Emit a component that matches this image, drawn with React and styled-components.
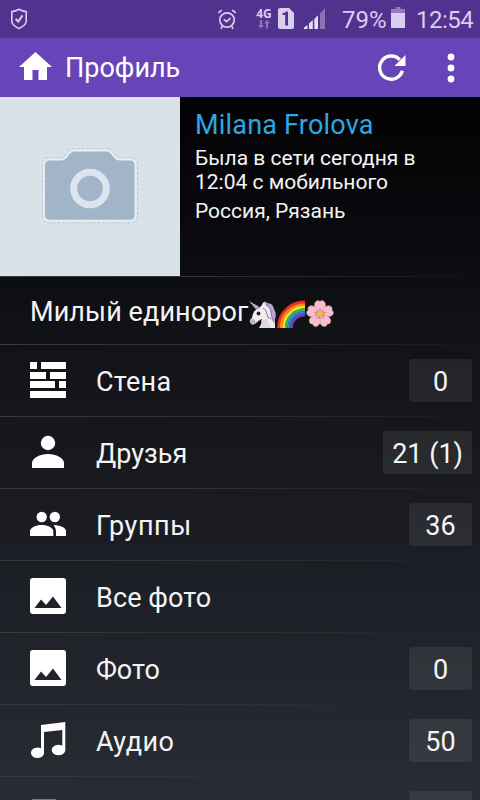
import React from 'react';
import styled, { createGlobalStyle } from 'styled-components';

const Global = createGlobalStyle`
  * { box-sizing: border-box; }
  body { margin: 0; background: #000; }
  svg { display: block; flex: none; }
`;

const Screen = styled.div`
  width: 480px;
  height: 800px;
  overflow: hidden;
  display: flex;
  flex-direction: column;
  font-family: Roboto, 'Noto Sans', sans-serif;
  color: #f4f4f6;
  background: linear-gradient(180deg, #020204 97px, #0a0a0e 230px, #111216 330px, #17181d 440px, #1c1e25 560px, #23252d 680px, #292c34 800px);
`;

const StatusBar = styled.header`
  height: 38px;
  flex: none;
  display: flex;
  align-items: center;
  padding: 0 5px 1px 10px;
  background: #51338f;
  color: #d9cdf0;
`;

const StatusTray = styled.div`
  display: flex;
  align-items: center;
  margin-left: auto;
`;

const Network = styled.div`
  display: flex;
  flex-direction: column;
  align-items: center;
  width: 18px;
  height: 22px;
  margin: 0 5px 0 18px;
  font: 700 12px/12px 'Open Sans', sans-serif;
`;

const StatusText = styled.span`
  width: ${(p) => p.$width}px;
  margin-left: ${(p) => p.$gap}px;
  font-size: 24px;
  line-height: 28px;
  letter-spacing: ${(p) => p.$spacing || 0}px;
  white-space: nowrap;
  padding-top: 2px;
`;

const Spaced = styled.div`
  margin-left: ${(p) => p.$gap}px;
  padding-bottom: ${(p) => p.$lift || 0}px;
`;

const Toolbar = styled.div`
  height: 59px;
  flex: none;
  display: flex;
  align-items: center;
  padding: 0 25px 0 18px;
  background: #6844b9;
  color: #fff;
`;

const ToolbarGlyph = styled.div`
  padding-bottom: 4px;
`;

const Title = styled.h1`
  margin: 0 auto 0 12px;
  font-size: 27px;
  line-height: 32px;
  font-weight: 400;
`;

const IconButton = styled.button`
  border: 0;
  padding: 0;
  margin-left: ${(p) => p.$gap || 0}px;
  background: none;
  color: inherit;
`;

const fade = 'linear-gradient(90deg, #383a40, #2d2f35 50%, rgba(45, 47, 53, 0.1))';

const Profile = styled.section`
  height: 180px;
  flex: none;
  display: flex;
  border-bottom: 1px solid;
  border-image: ${fade} 1;
`;

const Avatar = styled.div`
  width: 180px;
  height: 179px;
  flex: none;
  border-top: 1px solid #e2d9fa;
  background:
    repeating-linear-gradient(0deg, rgba(255, 255, 255, 0.07) 0 1px, transparent 1px 4px),
    repeating-linear-gradient(90deg, rgba(255, 255, 255, 0.07) 0 1px, transparent 1px 4px),
    #d8e0e8;
`;

const Details = styled.div`
  padding: 12px 0 0 15px;
`;

const Name = styled.h2`
  margin: 0 0 5px;
  font-size: 27px;
  line-height: 32px;
  font-weight: 400;
  letter-spacing: 0.2px;
  color: #2ba7e6;
`;

const Info = styled.p`
  margin: 0 0 5px;
  width: 240px;
  font-size: 21px;
  line-height: 24px;
`;

const About = styled.div`
  height: 68px;
  flex: none;
  display: flex;
  align-items: center;
  padding: 3px 0 0 30px;
  font-size: 27px;
  letter-spacing: 0.1px;
  border-bottom: 1px solid;
  border-image: ${fade} 1;
`;

const EmojiGroup = styled.span`
  display: flex;
  gap: 1px;
  margin-left: 1px;
  padding-top: 4px;
`;

const Row = styled.div`
  height: 72px;
  flex: none;
  display: flex;
  align-items: center;
  padding: 0 8px 0 30px;
  border-bottom: 1px solid;
  border-image: ${fade} 1;
`;

const RowIcon = styled.div`
  padding-bottom: 2px;
  color: #fff;
`;

const Label = styled.span`
  margin: 2px auto 0 30px;
  font-size: 27px;
  line-height: 32px;
  letter-spacing: ${(p) => p.$spacing || 0}px;
`;

const Count = styled.span`
  min-width: 63px;
  height: 43px;
  padding: 2px 9px 0 9px;
  border-radius: 3px;
  background: rgba(255, 255, 255, 0.075);
  font-size: 27px;
  line-height: 43px;
  text-align: center;
  white-space: nowrap;
`;

const ShieldIcon = () => (
  <svg width="18" height="22" viewBox="0 0 18 22" fill="none" stroke="currentColor" strokeWidth="1.6">
    <path d="M9 1.2Q12.5 3.2 16.2 3.6V13.5Q16 17 9 20.6Q2 17 1.8 13.5V3.6Q5.5 3.2 9 1.2Z" />
    <path d="M5.6 10.8l2.6 2.8 4.4-6.2" strokeWidth="2" />
  </svg>
);

const AlarmIcon = () => (
  <svg width="20" height="22" viewBox="0 0 20 22" fill="none" stroke="currentColor" strokeWidth="1.7">
    <circle cx="10" cy="12" r="7.2" />
    <path d="M1.5 5.2Q2.5 3 5 2.3M18.5 5.2Q17.5 3 15 2.3M5 18.2L4.2 21M15 18.2l.8 2.8" />
    <path d="M6.8 11.3l2.7 2.4 4-3.6" />
  </svg>
);

const DataArrows = () => (
  <svg width="12" height="9" viewBox="0 0 12 9" fill="#8d76bd">
    <path d="M2 0h2v5h2L3 8.5 0 5h2zM8 8.5h2v-5h2L9 0 6 3.5h2z" />
  </svg>
);

const SimIcon = () => (
  <svg width="16" height="21" viewBox="0 0 16 21">
    <path d="M2 0h9l5 5v14q0 2-2 2H2q-2 0-2-2V2q0-2 2-2z" fill="#d9cdf0" />
    <path d="M4.5 7V5.2Q7.5 5 8 3.6h2v14H7.2V7z" fill="#51338f" />
  </svg>
);

const SignalIcon = () => (
  <svg width="21" height="21" viewBox="0 0 21 21" fill="#e5dcf5">
    <path d="M0 21v-1.5L3.5 17v4zM5 21v-5.5L8.8 12v9zM10.3 21V11L14 7.3V21z" />
    <path d="M16 21V5.5L21 0v21z" fill="#8973b5" />
  </svg>
);

const BatteryIcon = () => (
  <svg width="14" height="21" viewBox="0 0 14 21">
    <path d="M4.5 0h5v2H14v5H0V2h4.5z" fill="#917bbd" />
    <path d="M0 6h14v15H0z" fill="#d9cdf0" />
  </svg>
);

const HomeIcon = () => (
  <svg width="35" height="30" viewBox="0 0 35 30" fill="currentColor">
    <path d="M17.5 1L34 16h-5v13h-8.5V19h-6v10H6V16H1z" />
  </svg>
);

const RefreshIcon = () => (
  <svg width="28" height="28" viewBox="0 0 28 28">
    <path d="M21.8 5.8A11.6 11.6 0 1 0 24.4 16.8" fill="none" stroke="currentColor" strokeWidth="3.4" />
    <path d="M27.5 1v11H16.5z" fill="currentColor" />
  </svg>
);

const MoreIcon = () => (
  <svg width="8" height="30" viewBox="0 0 8 30" fill="currentColor">
    <circle cx="4" cy="4" r="3.4" />
    <circle cx="4" cy="15" r="3.4" />
    <circle cx="4" cy="26" r="3.4" />
  </svg>
);

const CameraIcon = () => (
  <svg width="180" height="178" viewBox="0 1 180 178">
    <path
      d="M50 60.5H61Q64 60 66 57Q69 51.5 75 51.5H106Q111 51.5 114 56Q117 60.5 120 60.5H130Q137.5 61 137.5 68V118Q137.5 126 130 126H50Q42.5 126 42.5 118V68Q42.5 60.5 50 60.5Z"
      fill="none" stroke="#b9c2cc" strokeWidth="0.8" strokeDasharray="3 2"
    />
    <path
      d="M50 62.5H62Q65 62 67 59Q70 53.5 75 53.5H106Q110 53.5 113 58Q116 62.5 120 62.5H130Q135.5 62.5 135.5 68V118Q135.5 123.7 130 123.7H50Q44 123.7 44 118V68Q44 62.5 50 62.5Z"
      fill="#a2b5c8" stroke="#e6edf5" strokeWidth="2"
    />
    <circle cx="90" cy="91.5" r="16.3" fill="none" stroke="#dce4ed" strokeWidth="7" />
  </svg>
);

const WallIcon = () => (
  <svg width="36" height="36" viewBox="0 0 36 36" fill="currentColor">
    <path d="M0 0h7v7H0zM11 0h25v7H11zM0 10h16v7H0zM20 10h16v7H20zM0 19h25v7H0zM29 19h7v7h-7zM0 29h36v7H0z" />
  </svg>
);

const PersonIcon = () => (
  <svg width="36" height="36" viewBox="0 0 36 36" fill="currentColor">
    <circle cx="18" cy="9" r="7.2" />
    <path d="M2 34v-5c0-5 8-9 16-9s16 4 16 9v5z" />
  </svg>
);

const GroupIcon = () => (
  <svg width="36" height="36" viewBox="0 0 36 36" fill="currentColor">
    <circle cx="11.7" cy="11" r="5.2" />
    <path d="M0 30v-4.5C0 21.5 6 19 11.7 19s11.6 2.5 11.6 6.5V30z" />
    <circle cx="24.8" cy="11" r="5.2" />
    <path d="M23.5 19.3C30 19 36 21.5 36 25.5V30H26v-4.5q0-3.8-2.5-6.2z" />
  </svg>
);

const PhotoIcon = () => (
  <svg width="36" height="36" viewBox="0 0 36 36" fill="currentColor">
    <path fillRule="evenodd" d="M3 0h30q3 0 3 3v30q0 3-3 3H3q-3 0-3-3V3q0-3 3-3zM4.5 30h27L23 18.5l-7 8.5-5-5.5z" />
  </svg>
);

const MusicIcon = () => (
  <svg width="36" height="36" viewBox="0 0 36 36" fill="currentColor">
    <path d="M11 3L35.3 0v28h-3V8L14 10v20.500h-3z" />
    <ellipse cx="7.5" cy="30.8" rx="6.6" ry="5.2" />
    <ellipse cx="28.500" cy="28" rx="6.8" ry="5.2" />
  </svg>
);

const VideoIcon = () => (
  <svg width="36" height="36" viewBox="0 0 36 36" fill="#777980">
    <path d="M2 5h24v28H2z" />
  </svg>
);

const Unicorn = () => (
  <svg width="27" height="28" viewBox="0 0 27 28" role="img" aria-label="🦄">
    <path d="M13 4Q16-.5 18 3Q24 3 25 9Q28 14 26 19V28H13Z" fill="#b9a6ce" />
    <path d="M10 8L13 5L15 2L17 6Q22 8 22 15Q22 21 26 24V28H10Q13 24 13 19Q10 20 7 23Q3 26 1 22Q0 20 3 18Q4 10 10 8Z" fill="#f3ebf2" />
    <path d="M0 1L10.5 7L7.5 10Z" fill="#aaa0bb" />
    <path d="M2.5 3l-.3 1M5 4.5l-.5 1.5M7.5 6L6.5 8" stroke="#eee8f1" strokeWidth=".8" />
    <path d="M17 4q5 3 5 8t3 9M14 8q4 2 4 6t4 5" fill="none" stroke="#8773a8" strokeWidth="1" />
    <path d="M1 21q1-2 3-2t3 4q-3 3-5 1z" fill="#c1b1bd" />
    <path d="M12 20q4 1 7-3-1 6 3 11H11q3-4 1-8z" fill="#e2d4e0" />
    <circle cx="9.5" cy="13.5" r="1.9" fill="#25222d" />
  </svg>
);

const bands = [
  { r: 26, color: '#f02b22' },
  { r: 23.4, color: '#fb8b17' },
  { r: 20.8, color: '#f8e12c' },
  { r: 18.2, color: '#39b849' },
  { r: 15.6, color: '#2482e2' },
  { r: 13, color: '#7040ae' },
];

const Rainbow = () => (
  <svg width="28" height="28" viewBox="0 0 28 28" role="img" aria-label="🌈" fill="none" strokeWidth="2.8">
    {bands.map(({ r, color }) => (
      <path key={color} d={`M${27.5 - r} 28A${r} ${r - 0.5} 0 0 1 28 ${28 - r}`} stroke={color} />
    ))}
  </svg>
);

const Blossom = () => (
  <svg width="28" height="28" viewBox="0 0 28 28" role="img" aria-label="🌸">
    {[0, 72, 144, 216, 288].map((angle) => (
      <g key={angle} transform={`rotate(${angle} 14 14)`}>
        <path d="M14 14C8 10 7 3 10.5 1Q12.5 0 14 1.6Q15.5 0 17.5 1C21 3 20 10 14 14Z" fill="#f6c0cb" stroke="#d995a6" strokeWidth=".5" />
        <path d="M14 13V8M13 12l-1.5-2.5M15 12l1.5-2.5" stroke="#c8607f" strokeWidth=".8" />
      </g>
    ))}
    <circle cx="14" cy="14" r="2.8" fill="#f1bc32" />
  </svg>
);

const rows = [
  { label: 'Стена', count: '0', Icon: WallIcon, spacing: 0.25 },
  { label: 'Друзья', count: '21 (1)', Icon: PersonIcon },
  { label: 'Группы', count: '36', Icon: GroupIcon, spacing: 0.6 },
  { label: 'Все фото', Icon: PhotoIcon, spacing: 0.1 },
  { label: 'Фото', count: '0', Icon: PhotoIcon },
  { label: 'Аудио', count: '50', Icon: MusicIcon, spacing: 0.4 },
  { label: '', count: ' ', Icon: VideoIcon },
];

export default function App() {
  return (
    <Screen>
      <Global />
      <StatusBar>
        <ShieldIcon />
        <StatusTray>
          <AlarmIcon />
          <Network>4G<DataArrows /></Network>
          <SimIcon />
          <Spaced $gap={10}><SignalIcon /></Spaced>
          <StatusText $gap={17} $width={44}>79%</StatusText>
          <Spaced $gap={5} $lift={2}><BatteryIcon /></Spaced>
          <StatusText $gap={11} $width={59} $spacing={-0.5}>12:54</StatusText>
        </StatusTray>
      </StatusBar>
      <Toolbar>
        <ToolbarGlyph><HomeIcon /></ToolbarGlyph>
        <Title>Профиль</Title>
        <IconButton aria-label="Обновить"><RefreshIcon /></IconButton>
        <IconButton aria-label="Меню" $gap={41}><MoreIcon /></IconButton>
      </Toolbar>
      <Profile>
        <Avatar><CameraIcon /></Avatar>
        <Details>
          <Name>Milana Frolova</Name>
          <Info>Была в сети сегодня в 12:04 с мобильного</Info>
          <Info>Россия, Рязань</Info>
        </Details>
      </Profile>
      <About>
        Милый единорог
        <EmojiGroup><Unicorn /><Rainbow /><Blossom /></EmojiGroup>
      </About>
      {rows.map(({ label, count, Icon, spacing }) => (
        <Row key={label}>
          <RowIcon><Icon /></RowIcon>
          <Label $spacing={spacing}>{label}</Label>
          {count && <Count>{count}</Count>}
        </Row>
      ))}
    </Screen>
  );
}
